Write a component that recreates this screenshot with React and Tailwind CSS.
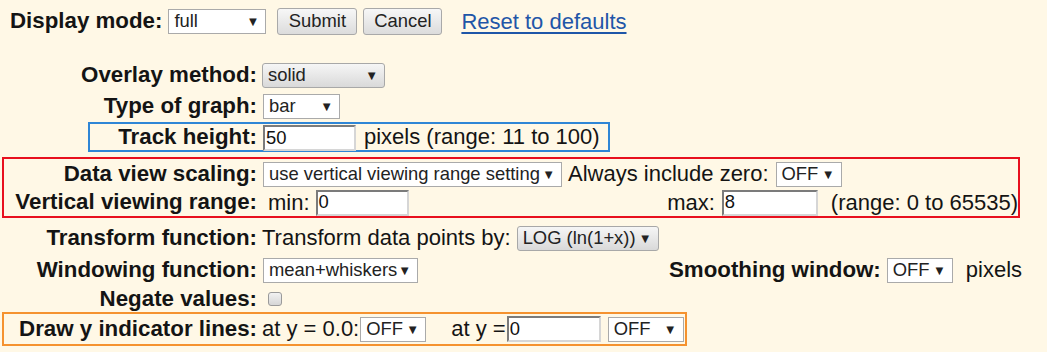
import clsx from "clsx";

/** Fake <select>: text + black triangle, white or grey gradient */
function Select({ w, gray, children }) {
    return (
        <div
            className={clsx(
                "inline-flex h-[25px] shrink-0 items-center justify-between border pl-[5px] pr-[6px] text-[18.4px] leading-none text-[#222]",
                w,
                gray
                    ? "rounded-[3px] border-[#a8a8a8] bg-linear-to-b from-[#f6f6f6] to-[#d9d9d9]"
                    : "border-[#aaaaaa] bg-white"
            )}
        >
            <span>{children}</span>
            <span className="text-[13px]">▼</span>
        </div>
    );
}

/** Fake text input with the inset border */
function Input({ w, children }) {
    return (
        <div
            className={clsx(
                "flex h-[26px] shrink-0 items-center border-2 border-t-[#7b7b7b] border-l-[#7b7b7b] border-r-[#d6d6d6] border-b-[#d6d6d6] bg-white pl-[1px] text-[18.4px] leading-none text-[#111]",
                w
            )}
        >
            {children}
        </div>
    );
}

function Label({ w, children }) {
    return <div className={clsx("shrink-0 text-right text-[22.3px] font-bold leading-none", w)}>{children}</div>;
}

function Button({ w, children }) {
    return (
        <div
            className={clsx(
                "flex h-[27px] shrink-0 items-center justify-center rounded-[3px] border border-[#a9a9a9] bg-linear-to-b from-[#f7f7f7] to-[#dcdcdc] text-[18.4px] leading-none text-[#222]",
                w
            )}
        >
            {children}
        </div>
    );
}

export default function App() {
    return (
        <div className="h-[352px] w-[1047px] overflow-hidden whitespace-nowrap bg-[#fff8e6] font-['Liberation_Sans',Arial,sans-serif] text-[22px] leading-none text-[#141414]">
            {/* Display mode + submit row */}
            <div className="flex h-[27px] items-center pl-[10px] mt-[8px]">
                <span className="text-[22.3px] font-bold">Display mode:</span>
                <div className="ml-[6px]">
                    <Select w="w-[98px]">full</Select>
                </div>
                <div className="ml-[11px]">
                    <Button w="w-[80px]">Submit</Button>
                </div>
                <div className="ml-[6px]">
                    <Button w="w-[79px]">Cancel</Button>
                </div>
                <a className="ml-[19px] text-[#1f56a8] underline underline-offset-[3px]">Reset to defaults</a>
            </div>

            <div className="mt-[24px] flex h-[32px] items-center">
                <Label w="w-[257px]">Overlay method:</Label>
                <div className="ml-[5px]">
                    <Select w="w-[123px]" gray>solid</Select>
                </div>
            </div>

            <div className="flex h-[31px] items-center">
                <Label w="w-[257px]">Type of graph:</Label>
                <div className="ml-[6px]">
                    <Select w="w-[77px]">bar</Select>
                </div>
            </div>

            {/* Track height, blue frame */}
            <div className="ml-[88px] flex h-[30px] w-[522px] items-center border-2 border-[#2f86d6]">
                <Label w="w-[167px]">Track height:</Label>
                <div className="ml-[6px] mt-[2px]">
                    <Input w="w-[93px]">50</Input>
                </div>
                <span className="ml-[8px]">pixels (range: 11 to 100)</span>
            </div>

            {/* Data view scaling, red frame */}
            <div className="ml-[2px] mt-[5px] flex h-[61px] w-[1018px] flex-col border-2 border-[#e8101e]">
                <div className="flex h-[30px] items-center">
                    <Label w="w-[253px]">Data view scaling:</Label>
                    <div className="ml-[6px]">
                        <Select w="w-[299px]">use vertical viewing range setting</Select>
                    </div>
                    <span className="ml-[6px]">Always include zero:</span>
                    <div className="ml-[7px]">
                        <Select w="w-[66px]">OFF</Select>
                    </div>
                </div>
                <div className="flex h-[27px] items-center">
                    <Label w="w-[253px]">Vertical viewing range:</Label>
                    <div className="flex w-[411px] items-center">
                        <span className="ml-[11px]">min:</span>
                        <div className="ml-[6px]">
                            <Input w="w-[93px]">0</Input>
                        </div>
                    </div>
                    <span>max:</span>
                    <div className="ml-[7px]">
                        <Input w="w-[96px]">8</Input>
                    </div>
                    <span className="ml-[13px]">(range: 0 to 65535)</span>
                </div>
            </div>

            <div className="mt-[4px] flex h-[32px] items-center">
                <Label w="w-[257px]">Transform function:</Label>
                <span className="ml-[5px]">Transform data points by:</span>
                <div className="ml-[6px]">
                    <Select w="w-[142px]" gray>LOG (ln(1+x))</Select>
                </div>
            </div>

            <div className="flex h-[32px] items-center">
                <Label w="w-[257px]">Windowing function:</Label>
                <div className="w-[412px]">
                    <div className="ml-[6px]">
                        <Select w="w-[155px]">mean+whiskers</Select>
                    </div>
                </div>
                <span className="text-[22.3px] font-bold">Smoothing window:</span>
                <div className="ml-[6px]">
                    <Select w="w-[66px]">OFF</Select>
                </div>
                <span className="ml-[13px]">pixels</span>
            </div>

            <div className="flex h-[26px] items-center">
                <Label w="w-[257px]">Negate values:</Label>
                <div className="ml-[11px] h-[14px] w-[14px] rounded-[3px] border border-[#9a9a9a] bg-linear-to-b from-[#f2f2f2] to-[#d6d6d6]" />
            </div>

            {/* y indicator lines, orange frame */}
            <div className="ml-[2px] flex h-[34px] w-[685px] items-center border-2 border-[#f5922f]">
                <Label w="w-[253px]">Draw y indicator lines:</Label>
                <span className="ml-[5px]">at y = 0.0:</span>
                <div className="ml-[1px]">
                    <Select w="w-[66px]">OFF</Select>
                </div>
                <span className="ml-[25px]">at y =</span>
                <div className="ml-[1px]">
                    <Input w="w-[94px]">0</Input>
                </div>
                <div className="ml-[7px]">
                    <Select w="w-[76px]">OFF</Select>
                </div>
            </div>
        </div>
    );
}
